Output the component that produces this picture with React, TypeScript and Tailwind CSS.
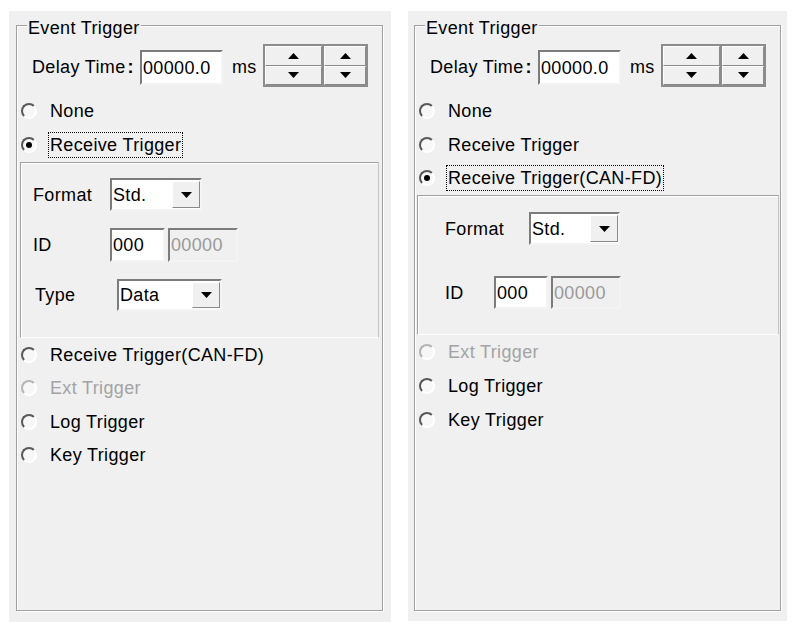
import React from 'react';

const sunken = 'border-2 border-t-[#7c7c7c] border-l-[#7c7c7c] border-r-[#f4f4f4] border-b-[#f4f4f4]';
const raised = 'border border-t-white border-l-white border-r-[#8a8a8a] border-b-[#8a8a8a] bg-[#f0f0f0]';

function Tri({ up }: { up?: boolean }) {
  return (
    <svg width="11" height="6" viewBox="0 0 11 6">
      <polygon points={up ? '0,6 11,6 5.5,0' : '0,0 11,0 5.5,6'} fill="#000" />
    </svg>
  );
}

function Spinner({ className }: { className: string }) {
  return (
    <div className={`flex flex-col h-[43px] border-2 border-[#8c8c8c] ${className}`}>
      <div className={`flex-1 flex items-center justify-center ${raised}`}>
        <Tri up />
      </div>
      <div className={`flex-1 flex items-center justify-center ${raised}`}>
        <Tri />
      </div>
    </div>
  );
}

function Combo({ value, className }: { value: string; className: string }) {
  return (
    <div className={`flex bg-white ${sunken} ${className}`}>
      <span className="flex-1 flex items-center pl-[1px]">{value}</span>
      <span className={`w-[28px] my-[1px] flex items-center justify-center ${raised}`}>
        <Tri />
      </span>
    </div>
  );
}

function Field({ value, disabled, className }: { value: string; disabled?: boolean; className: string }) {
  return (
    <div
      className={`flex items-center pl-[1px] ${sunken} ${className} ${
        disabled ? 'bg-[#f0f0f0] text-[#9a9a9a]' : 'bg-white'
      }`}
    >
      {value}
    </div>
  );
}

function Radio({
  label,
  checked,
  disabled,
  focused,
  className,
}: {
  label: string;
  checked?: boolean;
  disabled?: boolean;
  focused?: boolean;
  className: string;
}) {
  return (
    <div className={`flex items-center ${className}`}>
      <span
        className={`ml-[4px] w-[16px] h-[16px] shrink-0 rounded-full border-2 border-r-white border-b-white bg-[#f7f7f7] flex items-center justify-center ${
          disabled ? 'border-t-[#b4b4b4] border-l-[#b4b4b4]' : 'border-t-[#585858] border-l-[#585858]'
        }`}
      >
        {checked && <span className="w-[6px] h-[6px] rounded-full bg-black" />}
      </span>
      {focused ? (
        <span className="ml-[11px] px-[1px] py-[2px] border border-dotted border-black">{label}</span>
      ) : (
        <span className={`ml-[13px] ${disabled ? 'text-[#a3a3a3]' : ''}`}>{label}</span>
      )}
    </div>
  );
}

function DelayRow() {
  return (
    <div className="flex items-start mt-[18px] h-[43px]">
      <span className="ml-[15px] w-[108px] mt-[13px]">
        Delay Time<span className="font-bold ml-[2px]">:</span>
      </span>
      <Field value="00000.0" className="w-[83px] h-[35px] mt-[6px]" />
      <span className="ml-[9px] w-[31px] mt-[13px]">ms</span>
      <Spinner className="w-[61px]" />
      <Spinner className="w-[44px] border-l-0" />
    </div>
  );
}

function GroupBox({ children }: { children: React.ReactNode }) {
  return (
    <div className="relative w-[367px] h-[586px] border border-[#a0a0a0] shadow-[inset_1px_1px_0_#fff,1px_1px_0_#fff]">
      <span className="absolute left-[10px] -top-[8px] px-[1px] bg-[#f0f0f0]">Event Trigger</span>
      {children}
    </div>
  );
}

const subBox =
  'border border-t-[#a0a0a0] border-l-[#a0a0a0] border-r-[#c4c4c4] border-b-white shadow-[inset_1px_1px_0_#fff]';

export default function App() {
  return (
    <div className="min-h-screen bg-white flex items-start pl-[9px] pt-[11px] gap-[17px] font-['Liberation_Sans',Arial,sans-serif] text-[18px] leading-[20px] tracking-[0.35px] text-black">
      {/* Left panel: Receive Trigger selected */}
      <div className="w-[382px] h-[611px] bg-[#f0f0f0] pl-[7px] pt-[14px]">
        <GroupBox>
          <DelayRow />
          <Radio label="None" className="mt-[7px] h-[34px]" />
          <Radio label="Receive Trigger" checked focused className="h-[33px]" />
          <div className={`mt-[1px] mx-[3px] h-[176px] ${subBox}`}>
            <div className="flex items-center mt-[15px] h-[33px]">
              <span className="ml-[12px] w-[77px]">Format</span>
              <Combo value="Std." className="w-[92px] h-[33px]" />
            </div>
            <div className="flex items-center mt-[17px] h-[34px]">
              <span className="ml-[12px] w-[77px]">ID</span>
              <Field value="000" className="w-[55px] h-[34px]" />
              <Field value="00000" disabled className="ml-[3px] w-[70px] h-[34px]" />
            </div>
            <div className="flex items-center mt-[17px] h-[32px]">
              <span className="ml-[14px] w-[82px]">Type</span>
              <Combo value="Data" className="w-[105px] h-[32px]" />
            </div>
          </div>
          <Radio label="Receive Trigger(CAN-FD)" className="h-[33px]" />
          <Radio label="Ext Trigger" disabled className="h-[34px]" />
          <Radio label="Log Trigger" className="h-[33px]" />
          <Radio label="Key Trigger" className="h-[34px]" />
        </GroupBox>
      </div>

      {/* Right panel: Receive Trigger(CAN-FD) selected */}
      <div className="w-[379px] h-[610px] bg-[#f0f0f0] pl-[6px] pt-[14px]">
        <GroupBox>
          <DelayRow />
          <Radio label="None" className="mt-[7px] h-[34px]" />
          <Radio label="Receive Trigger" className="h-[33px]" />
          <Radio label="Receive Trigger(CAN-FD)" checked focused className="h-[34px]" />
          <div className={`ml-[2px] mr-[1px] h-[140px] ${subBox}`}>
            <div className="flex items-center mt-[16px] h-[33px]">
              <span className="ml-[27px] w-[84px]">Format</span>
              <Combo value="Std." className="w-[91px] h-[33px]" />
            </div>
            <div className="flex items-center mt-[31px] h-[33px]">
              <span className="ml-[27px] w-[49px]">ID</span>
              <Field value="000" className="w-[54px] h-[33px]" />
              <Field value="00000" disabled className="ml-[3px] w-[70px] h-[33px]" />
            </div>
          </div>
          <Radio label="Ext Trigger" disabled className="h-[34px]" />
          <Radio label="Log Trigger" className="h-[34px]" />
          <Radio label="Key Trigger" className="h-[33px]" />
        </GroupBox>
      </div>
    </div>
  );
}
